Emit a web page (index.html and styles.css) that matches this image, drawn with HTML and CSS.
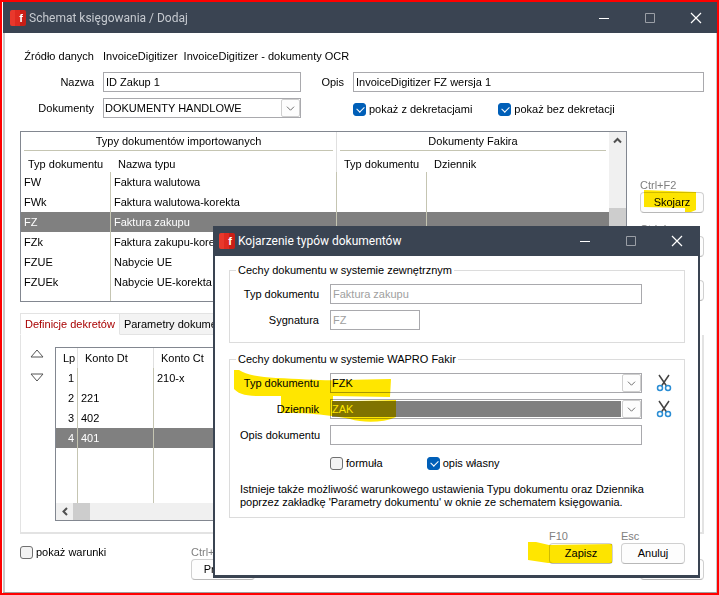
FILE: index.html
```
<!DOCTYPE html>
<html lang="pl">

<head>
    <meta charset="utf-8">
    <title>Schemat księgowania / Dodaj</title>
    <link rel="stylesheet" href="styles.css">
</head>

<body>
    <div class="window">
        <div class="titlebar">
            <span class="logo">f</span>
            <span class="title">Schemat księgowania / Dodaj</span>
            <button class="win-btn" type="button" aria-label="Minimalizuj"><svg width="12" height="12"><path d="M1 6.5h10" stroke="#fff" /></svg></button>
            <button class="win-btn" type="button" aria-label="Maksymalizuj"><svg width="12" height="12"><path d="M1.5 1.5h9v9h-9z" stroke="#9a9fa6" fill="none" /></svg></button>
            <button class="win-btn" type="button" aria-label="Zamknij"><svg width="12" height="12"><path d="M1 1l10 10M11 1L1 11" stroke="#fff" stroke-width="1.2" /></svg></button>
        </div>

        <div class="content">
            <div class="form">
                <span class="label">Źródło danych</span>
                <div class="source"><span>InvoiceDigitizer</span><span>InvoiceDigitizer - dokumenty OCR</span></div>

                <label class="label" for="nazwa">Nazwa</label>
                <input class="field" id="nazwa" type="text" value="ID Zakup 1">
                <label class="label" for="opis">Opis</label>
                <input class="field" id="opis" type="text" value="InvoiceDigitizer FZ wersja 1">

                <label class="label" for="dokumenty">Dokumenty</label>
                <div class="combo">
                    <select id="dokumenty"><option>DOKUMENTY HANDLOWE</option></select>
                    <svg class="combo-arrow" viewBox="0 0 18 18"><path d="M5 7.5l4 4 4-4" /></svg>
                </div>
                <div class="filters">
                    <label class="check"><input type="checkbox" checked>pokaż z dekretacjami</label>
                    <label class="check"><input type="checkbox" checked>pokaż bez dekretacji</label>
                </div>
            </div>

            <div class="types">
                <div class="grid">
                    <table class="types-table">
                        <colgroup><col class="c-type"><col class="c-name"><col class="c-type"><col></colgroup>
                        <thead>
                            <tr class="groups">
                                <th colspan="2"><span>Typy dokumentów importowanych</span></th>
                                <th colspan="2"><span>Dokumenty Fakira</span></th>
                            </tr>
                            <tr class="heads">
                                <th>Typ dokumentu</th>
                                <th>Nazwa typu</th>
                                <th>Typ dokumentu</th>
                                <th>Dziennik</th>
                            </tr>
                        </thead>
                        <tbody>
                            <tr><td>FW</td><td>Faktura walutowa</td><td></td><td></td></tr>
                            <tr><td>FWk</td><td>Faktura walutowa-korekta</td><td></td><td></td></tr>
                            <tr class="selected"><td>FZ</td><td>Faktura zakupu</td><td></td><td></td></tr>
                            <tr><td>FZk</td><td>Faktura zakupu-korekta</td><td></td><td></td></tr>
                            <tr><td>FZUE</td><td>Nabycie UE</td><td></td><td></td></tr>
                            <tr><td>FZUEk</td><td>Nabycie UE-korekta</td><td></td><td></td></tr>
                            <tr class="rest"><td></td><td></td><td></td><td></td></tr>
                        </tbody>
                    </table>
                    <div class="vscroll">
                        <svg width="17" height="17"><path d="M5 10.5l3.500-3.500 3.500 3.500" /></svg>
                        <div class="vthumb"></div>
                    </div>
                </div>
                <div class="side">
                    <div class="action">
                        <span class="key">Ctrl+F2</span>
                        <button class="btn" type="button">Skojarz</button>
                        <svg class="marker marker-link" width="54" height="24"><path d="M1 1L53 3V21L48 23H42V19L1 18z" /></svg>
                    </div>
                    <div class="action">
                        <span class="key">Ctrl+Ins</span>
                        <button class="btn" type="button">Kopiuj</button>
                    </div>
                    <div class="action">
                        <span class="key">Ctrl+Del</span>
                        <button class="btn" type="button">Usuń</button>
                    </div>
                </div>
            </div>

            <div class="tabs">
                <button class="tab active" type="button">Definicje dekretów</button>
                <button class="tab" type="button">Parametry dokumentu</button>
            </div>
            <div class="panel">
                <div class="movers">
                    <button type="button" aria-label="W górę"><svg width="14" height="9"><path d="M1 8L7 1l6 7z" /></svg></button>
                    <button type="button" aria-label="W dół"><svg width="14" height="9"><path d="M1 1L7 8l6-7z" /></svg></button>
                </div>
                <div class="entries">
                    <table class="entries-table">
                        <colgroup><col class="c-lp"><col class="c-konto"><col></colgroup>
                        <thead>
                            <tr><th>Lp</th><th>Konto Dt</th><th>Konto Ct</th></tr>
                        </thead>
                        <tbody>
                            <tr><td>1</td><td></td><td>210-x</td></tr>
                            <tr><td>2</td><td>221</td><td></td></tr>
                            <tr><td>3</td><td>402</td><td></td></tr>
                            <tr class="selected"><td>4</td><td>401</td><td></td></tr>
                            <tr class="rest"><td></td><td></td><td></td></tr>
                        </tbody>
                    </table>
                    <div class="hscroll">
                        <svg width="17" height="17"><path d="M11 5L7.5 8.5 11 12" /></svg>
                        <div class="hthumb"></div>
                    </div>
                </div>
            </div>

            <div class="bottom">
                <label class="check"><input type="checkbox">pokaż warunki</label>
                <div class="action">
                    <span class="key">Ctrl+S</span>
                    <button class="btn" type="button">Przelicz</button>
                </div>
                <button class="btn last" type="button" aria-label="Zamknij"></button>
            </div>
        </div>
    </div>

    <div class="dialog" role="dialog" aria-label="Kojarzenie typów dokumentów">
        <div class="titlebar">
            <span class="logo">f</span>
            <span class="title">Kojarzenie typów dokumentów</span>
            <button class="win-btn" type="button" aria-label="Minimalizuj"><svg width="12" height="12"><path d="M1 6.5h10" stroke="#fff" /></svg></button>
            <button class="win-btn" type="button" aria-label="Maksymalizuj"><svg width="12" height="12"><path d="M1.5 1.5h9v9h-9z" stroke="#9a9fa6" fill="none" /></svg></button>
            <button class="win-btn" type="button" aria-label="Zamknij"><svg width="12" height="12"><path d="M1 1l10 10M11 1L1 11" stroke="#fff" stroke-width="1.2" /></svg></button>
        </div>
        <div class="dialog-body">
            <fieldset>
                <legend>Cechy dokumentu w systemie zewnętrznym</legend>
                <div class="rows">
                    <label class="label" for="ext-typ">Typ dokumentu</label>
                    <input class="field" id="ext-typ" type="text" value="Faktura zakupu" disabled>
                    <label class="label" for="ext-syg">Sygnatura</label>
                    <input class="field short" id="ext-syg" type="text" value="FZ" disabled>
                </div>
            </fieldset>
            <fieldset>
                <legend>Cechy dokumentu w systemie WAPRO Fakir</legend>
                <div class="rows">
                    <label class="label" for="typ">Typ dokumentu</label>
                    <div class="combo">
                        <select id="typ"><option>FZK</option></select>
                        <svg class="combo-arrow" viewBox="0 0 18 18"><path d="M5 7.5l4 4 4-4" /></svg>
                    </div>
                    <button class="cut" type="button" aria-label="Wyczyść typ">
                        <svg width="16" height="18"><path class="blade" d="M3 1l7.500 11M13 1L5.500 12" /><circle cx="4" cy="14" r="2.5" /><circle cx="12" cy="14" r="2.5" /></svg>
                    </button>
                    <label class="label" for="dziennik">Dziennik</label>
                    <div class="combo focused">
                        <select id="dziennik"><option>ZAK</option></select>
                        <svg class="combo-arrow" viewBox="0 0 18 18"><path d="M5 7.5l4 4 4-4" /></svg>
                    </div>
                    <button class="cut" type="button" aria-label="Wyczyść dziennik">
                        <svg width="16" height="18"><path class="blade" d="M3 1l7.500 11M13 1L5.500 12" /><circle cx="4" cy="14" r="2.5" /><circle cx="12" cy="14" r="2.5" /></svg>
                    </button>
                    <label class="label" for="opis-dok">Opis dokumentu</label>
                    <input class="field" id="opis-dok" type="text">
                    <div class="options">
                        <label class="check"><input type="checkbox">formuła</label>
                        <label class="check"><input type="checkbox" checked>opis własny</label>
                    </div>
                </div>
                <p>Istnieje także możliwość warunkowego ustawienia Typu dokumentu oraz Dziennika<br>poprzez zakładkę 'Parametry dokumentu' w oknie ze schematem księgowania.</p>
                <svg class="marker marker-fields" width="164" height="54"><path d="M1 1H6C14 6 26 8 43 9C70 10 90 12 110 11L158 10L157 28L100 27V32L120 32L163 31V48C150 54 130 54 117 50C90 45 76 44 48 44V27H28C14 27 7 26 1 20z" /></svg>
            </fieldset>
            <div class="dialog-actions">
                <div class="action">
                    <span class="key">F10</span>
                    <button class="btn" type="button">Zapisz</button>
                    <svg class="marker marker-save" width="86" height="24"><path d="M1 1H9L22 4L85 3V22H21L1 19z" /></svg>
                </div>
                <div class="action">
                    <span class="key">Esc</span>
                    <button class="btn" type="button">Anuluj</button>
                </div>
            </div>
        </div>
    </div>
</body>

</html>
```
FILE: styles.css
```
* {
    box-sizing: border-box;
    margin: 0;
    padding: 0;
}

body {
    position: relative;
    min-height: 100vh;
    border: 2px solid #ff0000;
    background: #fff;
    color: #000;
    font: 11px/13px "Liberation Sans", Arial, sans-serif;
    display: flex;
}

button,
input,
select {
    font: inherit;
    color: inherit;
}

svg {
    display: block;
    fill: none;
}

.window {
    flex: 1;
    margin-left: 1px;
    border-bottom: 1px solid #a0a0a0;
}

.titlebar {
    display: flex;
    align-items: center;
    gap: 34px;
    height: 31px;
    padding: 0 15px 0 7px;
    background: #3a4452;
    color: #c6cad0;
}

.logo {
    width: 16px;
    height: 16px;
    margin-right: -31px;
    border-radius: 2px;
    background: linear-gradient(90deg, #e9382c 5px, #df2a20 5px, #df2a20 10px, #c81f17 10px);
    color: #fff;
    font: bold 11px/16px "Liberation Sans", sans-serif;
    text-align: right;
    padding-right: 3px;
}

.title {
    flex: 1;
    font: 12px/16px Roboto, "Open Sans", sans-serif;
    white-space: nowrap;
}

.win-btn {
    border: 0;
    background: none;
}

.content {
    padding: 13px 12px 12px 15px;
    border-left: 2px solid #c8c8c8;
    border-right: 1px solid #c8c8c8;
}

.form {
    display: grid;
    grid-template-columns: 74px 198px 34px 1fr;
    grid-auto-rows: 20px;
    gap: 6px 9px;
    align-items: center;
    margin-bottom: 13px;
}

.label {
    text-align: right;
    white-space: nowrap;
}

.source {
    grid-column: 2 / 5;
    display: flex;
    gap: 6px;
}

.field {
    width: 100%;
    height: 20px;
    padding: 0 2px;
    border: 1px solid #a9a9ad;
    background: #fff;
}

.field:disabled {
    color: #a0a0a0;
}

.field.short {
    width: 90px;
}

.combo {
    position: relative;
    height: 20px;
    padding: 1px 20px 1px 1px;
    border: 1px solid #a9a9ad;
}

.combo select {
    display: block;
    width: 100%;
    height: 16px;
    border: 0;
    appearance: none;
    background: #fff;
    outline: 0;
}

.combo.focused select {
    background: #808080;
    color: #fff;
}

.combo-arrow {
    position: absolute;
    top: 0;
    right: 0;
    width: 19px;
    height: 18px;
    border: 1px solid #cfcfcf;
    border-radius: 2px;
    background: #fdfdfd;
    stroke: #606060;
    pointer-events: none;
}

.filters {
    grid-column: 4;
    display: flex;
    gap: 26px;
    padding-top: 2px;
}

.check {
    display: flex;
    align-items: center;
    gap: 3px;
    white-space: nowrap;
}

.check input {
    position: relative;
    width: 13px;
    height: 13px;
    appearance: none;
    border: 1px solid #707070;
    border-radius: 3px;
    background: #f3f3f3;
}

.check input:checked {
    border-color: #005fb8;
    background: #005fb8;
}

.check input:checked::after {
    content: "";
    position: absolute;
    left: 3px;
    top: 2px;
    width: 6px;
    height: 4px;
    border: solid #fff;
    border-width: 0 0 1px 1px;
    transform: rotate(-45deg);
}

.types {
    display: flex;
    gap: 13px;
}

.grid {
    flex: 1;
    display: flex;
    border: 1px solid #828790;
}

table {
    width: 100%;
    table-layout: fixed;
    border-collapse: separate;
    border-spacing: 0;
}

th {
    font-weight: normal;
    text-align: left;
}

td {
    height: 20px;
    padding: 0 3px;
    border-right: 1px solid #c5c5b2;
    white-space: nowrap;
    overflow: hidden;
}

td:last-child {
    border-right: 0;
}

.selected td {
    background: #808080;
    color: #fff;
}

.c-type {
    width: 90px;
}

.c-name {
    width: 226px;
}

.groups th {
    height: 19px;
    padding: 0 3px;
    text-align: center;
}

.groups th span {
    display: block;
    height: 19px;
    line-height: 18px;
    border-bottom: 1px solid #c5c5b2;
}

.groups th:first-child,
.heads th:nth-child(2) {
    border-right: 1px solid #e0e0e0;
}

.heads th {
    height: 21px;
    padding: 6px 0 0 7px;
}

.types-table .rest td {
    height: 9px;
}

.vscroll {
    width: 17px;
    background: #f0f0f0;
}

.vscroll svg,
.hscroll svg {
    stroke: #505050;
    stroke-width: 2;
}

.vthumb {
    height: 51px;
    margin-top: 59px;
    background: #cdcdcd;
}

.side {
    display: flex;
    flex-direction: column;
    gap: 10px;
    padding-top: 48px;
}

.action {
    position: relative;
}

.key {
    display: block;
    color: #808080;
}

.btn {
    display: block;
    width: 64px;
    height: 21px;
    border: 1px solid #d0d0d0;
    border-bottom-color: #b8b8b8;
    border-radius: 4px;
    background: #fdfdfd;
}

.marker {
    position: absolute;
    fill: #ffe600;
    mix-blend-mode: multiply;
    pointer-events: none;
}

.marker-link {
    left: 3px;
    top: 10px;
}

.marker-fields {
    left: 3px;
    top: 3px;
}

.marker-save {
    right: 0;
    top: 11px;
}

.tabs {
    display: flex;
    margin-top: 11px;
}

.tab {
    height: 22px;
    padding: 0 4px;
    border: 1px solid #e3e3e3;
    border-left-width: 0;
    background: #f3f3f3;
    white-space: nowrap;
}

.tab.active {
    border-left-width: 1px;
    border-bottom-color: #fff;
    background: #fff;
    color: #a80000;
}

.panel {
    display: flex;
    gap: 11px;
    padding: 12px 10px 11px 9px;
    border: solid #e3e3e3;
    border-width: 0 2px 2px 1px;
}

.movers {
    display: flex;
    flex-direction: column;
    gap: 15px;
    padding-top: 2px;
}

.movers button {
    border: 0;
    background: none;
    stroke: #555;
}

.entries {
    flex: 1;
    border: 1px solid #828790;
}

.c-lp {
    width: 22px;
}

.c-konto {
    width: 76px;
}

.entries-table th {
    height: 20px;
    padding-left: 7px;
    border-right: 1px solid #e0e0e0;
}

.entries-table td:first-child {
    text-align: right;
}

.entries-table .rest td {
    height: 55px;
}

.hscroll {
    display: flex;
    height: 17px;
    background: #f0f0f0;
}

.hthumb {
    width: 17px;
    background: #cdcdcd;
}

.bottom {
    display: flex;
    align-items: flex-start;
    padding-top: 12px;
}

.bottom .check {
    width: 171px;
}

.last {
    align-self: flex-end;
    margin-left: auto;
}

.dialog {
    position: absolute;
    left: 211px;
    right: 17px;
    top: 224px;
    border: solid #3a4452;
    border-width: 0 2px 3px;
    background: #fff;
}

.dialog .titlebar {
    height: 30px;
    padding: 0 15px 0 4px;
    color: #fff;
}

.dialog-body {
    padding: 8px 13px 11px 14px;
}

fieldset {
    position: relative;
    min-width: 0;
    margin-bottom: 10px;
    padding: 7px 10px 12px;
    border: 1px solid #dcdcdc;
}

fieldset + fieldset {
    padding-bottom: 8px;
}

legend {
    margin-left: -4px;
    padding: 0 2px;
}

.rows {
    display: grid;
    grid-template-columns: 79px 1fr 21px;
    grid-auto-rows: 20px;
    gap: 6px 11px;
    align-items: center;
}

.rows .label {
    grid-column: 1;
}

.cut {
    justify-self: center;
    border: 0;
    background: none;
}

.cut circle {
    stroke: #2a8dd4;
    stroke-width: 1.5;
}

.blade {
    stroke: #444;
    stroke-width: 1.5;
}

.options {
    grid-column: 2;
    display: flex;
    gap: 44px;
    padding-top: 4px;
}

fieldset p {
    margin-top: 12px;
    white-space: nowrap;
}

.dialog-actions {
    display: flex;
    justify-content: flex-end;
    gap: 8px;
    margin-top: 12px;
}
```
